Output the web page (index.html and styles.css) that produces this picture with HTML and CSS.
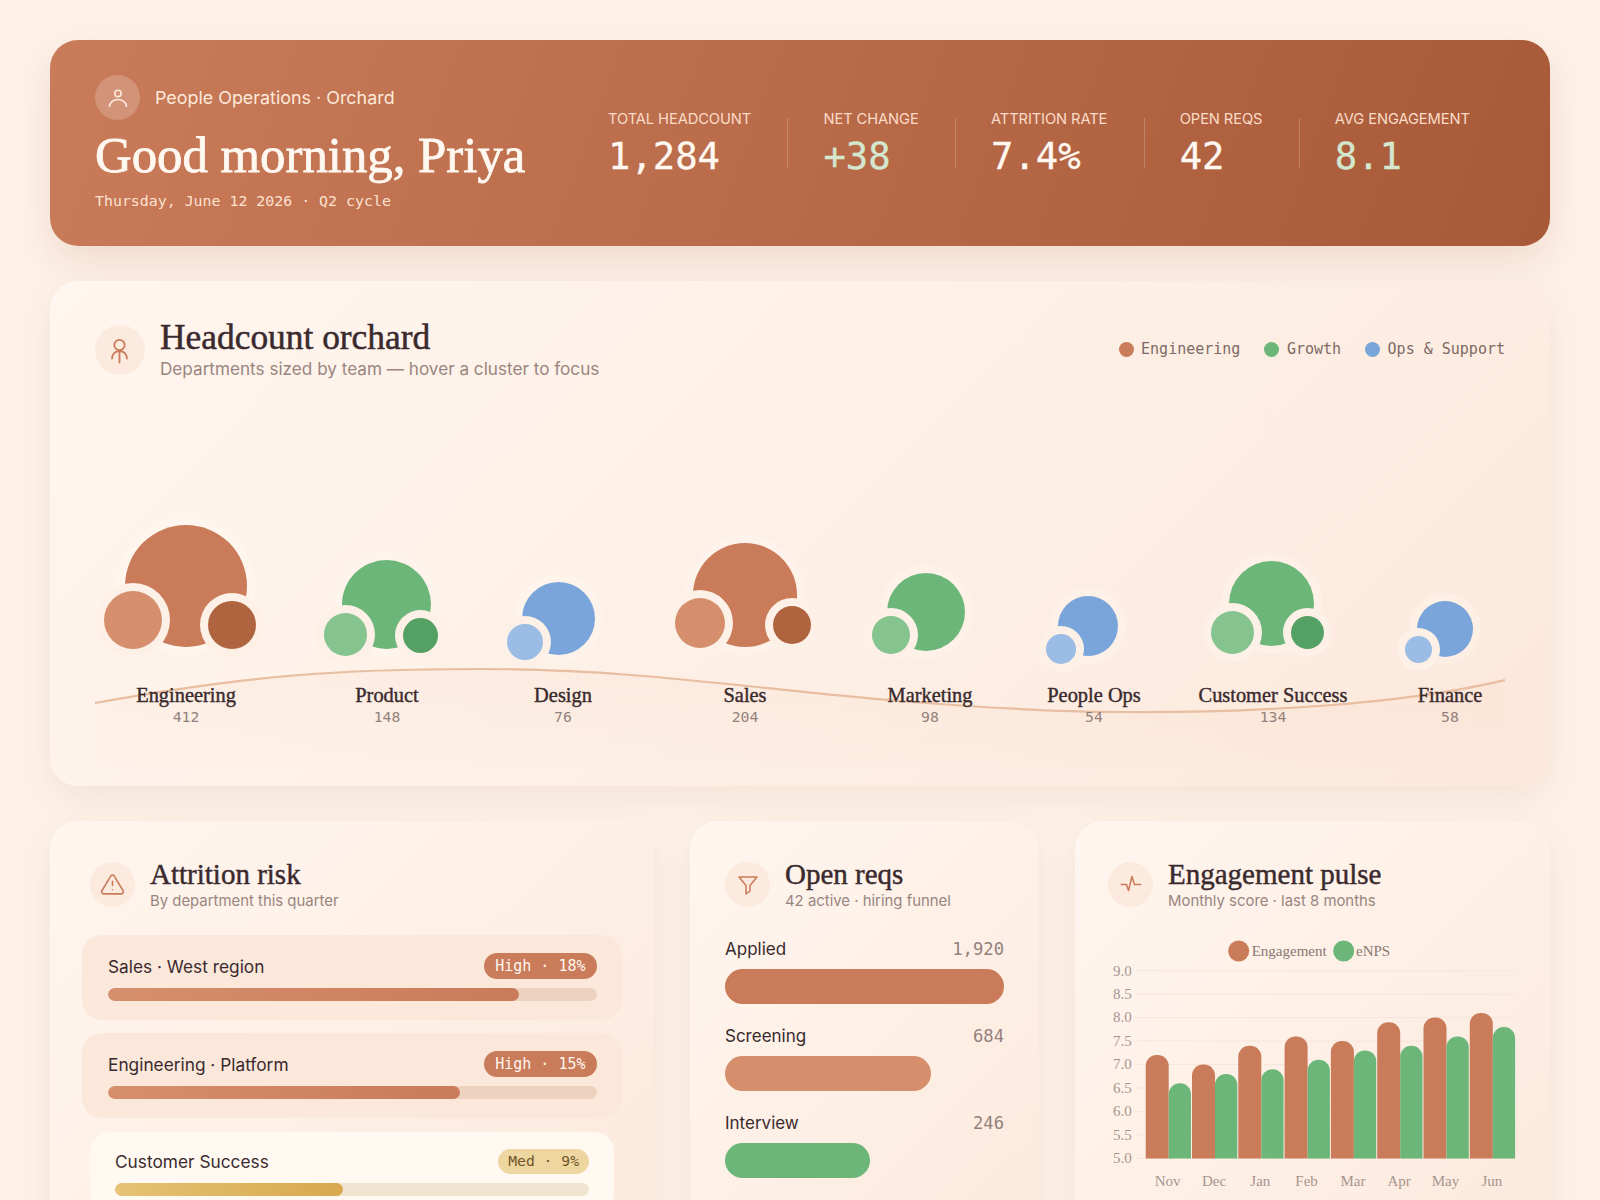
FILE: index.html
```html
<!DOCTYPE html>
<html lang="en">
<head>
<meta charset="utf-8">
<title>People Operations · Orchard</title>
<link rel="stylesheet" href="styles.css">
</head>
<body>
<main class="page">
  <header class="hero">
    <div class="hero-left">
      <div class="eyebrow">
        <span class="hero-icon">
          <svg viewBox="0 0 24 24" width="24" height="24" fill="none" stroke="currentColor" stroke-width="1.6" stroke-linecap="round"><circle cx="12" cy="7.5" r="3.2"/><path d="M3.5 20.5a8.5 7 0 0 1 17 0"/></svg>
        </span>
        <span>People Operations · Orchard</span>
      </div>
      <h1 class="hero-title">Good morning, Priya</h1>
      <div class="hero-date">Thursday, June 12 2026 · Q2 cycle</div>
    </div>
    <div class="stats">
      <div class="stat"><div class="stat-label">TOTAL HEADCOUNT</div><div class="stat-value">1,284</div></div>
      <div class="stat"><div class="stat-label">NET CHANGE</div><div class="stat-value good">+38</div></div>
      <div class="stat"><div class="stat-label">ATTRITION RATE</div><div class="stat-value">7.4%</div></div>
      <div class="stat"><div class="stat-label">OPEN REQS</div><div class="stat-value">42</div></div>
      <div class="stat"><div class="stat-label">AVG ENGAGEMENT</div><div class="stat-value good">8.1</div></div>
    </div>
  </header>

  <section class="card orchard-card">
    <div class="orchard-head">
      <div class="card-head">
        <span class="icon-badge big">
          <svg viewBox="0 0 30 30" width="30" height="30" fill="none" stroke="currentColor" stroke-width="1.8" stroke-linecap="round"><circle cx="14.5" cy="10" r="5.2"/><path d="M14.5 15.5V27.5"/><path d="M7 23.5a7.5 7.5 0 0 1 15 0"/></svg>
        </span>
        <div>
          <h2 class="card-title big">Headcount orchard</h2>
          <p class="card-sub big">Departments sized by team — hover a cluster to focus</p>
        </div>
      </div>
      <ul class="legend">
        <li class="legend-item"><span class="dot terra"></span>Engineering</li>
        <li class="legend-item"><span class="dot green"></span>Growth</li>
        <li class="legend-item"><span class="dot blue"></span>Ops &amp; Support</li>
      </ul>
    </div>

    <div class="orchard">
      <svg class="ground" viewBox="0 0 1410 370" width="1410" height="370" fill="none">
        <defs>
          <linearGradient id="groundFill" x1="0" y1="0" x2="0" y2="1">
            <stop offset="0" stop-color="#f3c9ae" stop-opacity=".12"/>
            <stop offset="1" stop-color="#f3c9ae" stop-opacity=".03"/>
          </linearGradient>
        </defs>
        <path d="M0 303C155 275 245 269 385 269C545 269 665 290 805 301C905 309 965 312 1025 312C1155 313 1305 305 1410 280V365H0Z" fill="url(#groundFill)"/>
        <path d="M0 303C155 275 245 269 385 269C545 269 665 290 805 301C905 309 965 312 1025 312C1155 313 1305 305 1410 280" stroke="#e8bda0" stroke-width="2.2"/>
      </svg>

      <span class="b main terra" style="left:30px;top:125px;width:122px;height:122px"></span>
      <span class="b side terra-l" style="left:9px;top:191px;width:58px;height:58px"></span>
      <span class="b side terra-d" style="left:113px;top:201px;width:48px;height:48px"></span>

      <span class="b main green" style="left:247px;top:160px;width:89px;height:89px"></span>
      <span class="b side green-l" style="left:229px;top:213px;width:43px;height:43px"></span>
      <span class="b side green-d" style="left:308px;top:218px;width:35px;height:35px"></span>

      <span class="b main blue" style="left:427px;top:182px;width:73px;height:73px"></span>
      <span class="b side blue-l" style="left:412px;top:224px;width:36px;height:36px"></span>

      <span class="b main terra" style="left:598px;top:143px;width:104px;height:104px"></span>
      <span class="b side terra-l" style="left:580px;top:198px;width:50px;height:50px"></span>
      <span class="b side terra-d" style="left:678px;top:206px;width:38px;height:38px"></span>

      <span class="b main green" style="left:792px;top:173px;width:78px;height:78px"></span>
      <span class="b side green-l" style="left:777px;top:216px;width:38px;height:38px"></span>

      <span class="b main blue" style="left:963px;top:196px;width:60px;height:60px"></span>
      <span class="b side blue-l" style="left:951px;top:234px;width:30px;height:30px"></span>

      <span class="b main green" style="left:1134px;top:161px;width:85px;height:85px"></span>
      <span class="b side green-l" style="left:1116px;top:211px;width:43px;height:43px"></span>
      <span class="b side green-d" style="left:1196px;top:216px;width:33px;height:33px"></span>

      <span class="b main blue" style="left:1322px;top:201px;width:56px;height:56px"></span>
      <span class="b side blue-l" style="left:1310px;top:236px;width:27px;height:27px"></span>

      <div class="tag" style="left:91px"><div class="tag-name">Engineering</div><div class="tag-count">412</div></div>
      <div class="tag" style="left:292px"><div class="tag-name">Product</div><div class="tag-count">148</div></div>
      <div class="tag" style="left:468px"><div class="tag-name">Design</div><div class="tag-count">76</div></div>
      <div class="tag" style="left:650px"><div class="tag-name">Sales</div><div class="tag-count">204</div></div>
      <div class="tag" style="left:835px"><div class="tag-name">Marketing</div><div class="tag-count">98</div></div>
      <div class="tag" style="left:999px"><div class="tag-name">People Ops</div><div class="tag-count">54</div></div>
      <div class="tag" style="left:1178px"><div class="tag-name">Customer Success</div><div class="tag-count">134</div></div>
      <div class="tag" style="left:1355px"><div class="tag-name">Finance</div><div class="tag-count">58</div></div>
    </div>
  </section>

  <div class="grid">
    <section class="card risk-card">
      <div class="card-head small">
        <span class="icon-badge">
          <svg viewBox="0 0 24 24" width="25" height="25" fill="none" stroke="currentColor" stroke-width="1.5" stroke-linecap="round" stroke-linejoin="round"><path d="M10.3 3.9 1.8 18a2 2 0 0 0 1.7 3h17a2 2 0 0 0 1.7-3L13.7 3.9a2 2 0 0 0-3.4 0Z"/><path d="M12 9v4"/><path d="M12 17h.01"/></svg>
        </span>
        <div>
          <h2 class="card-title">Attrition risk</h2>
          <p class="card-sub">By department this quarter</p>
        </div>
      </div>
      <div class="risks">
        <div class="risk">
          <div class="risk-top"><span>Sales · West region</span><span class="pill high">High · 18%</span></div>
          <div class="track"><div class="fill fill-high" style="width:84%"></div></div>
        </div>
        <div class="risk">
          <div class="risk-top"><span>Engineering · Platform</span><span class="pill high">High · 15%</span></div>
          <div class="track"><div class="fill fill-high" style="width:72%"></div></div>
        </div>
        <div class="risk risk-focus">
          <div class="risk-top"><span>Customer Success</span><span class="pill med">Med · 9%</span></div>
          <div class="track track-med"><div class="fill fill-med" style="width:48%"></div></div>
        </div>
      </div>
    </section>

    <section class="card">
      <div class="card-head small">
        <span class="icon-badge">
          <svg viewBox="0 0 24 24" width="24" height="24" fill="none" stroke="currentColor" stroke-width="1.5" stroke-linejoin="round"><path d="M3 4h18l-7 8.5V18l-4 3v-8.5Z"/></svg>
        </span>
        <div>
          <h2 class="card-title">Open reqs</h2>
          <p class="card-sub">42 active · hiring funnel</p>
        </div>
      </div>
      <div class="funnel">
        <div class="stage"><div class="stage-top"><span>Applied</span><span class="stage-num">1,920</span></div><div class="stage-bar terra" style="width:100%"></div></div>
        <div class="stage"><div class="stage-top"><span>Screening</span><span class="stage-num">684</span></div><div class="stage-bar terra-l" style="width:74%"></div></div>
        <div class="stage"><div class="stage-top"><span>Interview</span><span class="stage-num">246</span></div><div class="stage-bar green" style="width:52%"></div></div>
      </div>
    </section>

    <section class="card pulse-card">
      <div class="card-head small">
        <span class="icon-badge">
          <svg viewBox="0 0 24 24" width="24" height="24" fill="none" stroke="currentColor" stroke-width="1.5" stroke-linecap="round" stroke-linejoin="round"><path d="M2.2 11.5h5.3l2 6 3.5-14 2.5 8h6"/></svg>
        </span>
        <div>
          <h2 class="card-title">Engagement pulse</h2>
          <p class="card-sub">Monthly score · last 8 months</p>
        </div>
      </div>
      <svg class="chart" viewBox="0 0 408 252" width="408" height="252">
        <defs><clipPath id="plot"><rect x="0" y="0" width="408" height="218.6"/></clipPath></defs>
        <circle cx="130.7" cy="11" r="10.5" class="c-terra"/>
        <text x="143.7" y="16" class="chart-legend">Engagement</text>
        <circle cx="235.7" cy="11" r="10.5" class="c-green"/>
        <text x="248" y="16" class="chart-legend">eNPS</text>
        <g class="gridlines">
          <path d="M28 30.7H406M28 54.2H406M28 77.6H406M28 101H406M28 124.5H406M28 147.9H406M28 171.4H406M28 194.8H406M28 218.3H406"/>
        </g>
        <g class="chart-y">
          <text x="23.7" y="35.5">9.0</text><text x="23.7" y="59">8.5</text><text x="23.7" y="82.4">8.0</text><text x="23.7" y="105.8">7.5</text><text x="23.7" y="129.3">7.0</text><text x="23.7" y="152.7">6.5</text><text x="23.7" y="176.2">6.0</text><text x="23.7" y="199.6">5.5</text><text x="23.7" y="223.1">5.0</text>
        </g>
        <g clip-path="url(#plot)">
          <g class="c-terra">
            <rect x="37.7" y="115.1" width="23" height="130" rx="11"/><rect x="84" y="124.5" width="23" height="130" rx="11"/><rect x="130.3" y="105.7" width="23" height="140" rx="11"/><rect x="176.6" y="96.4" width="23" height="150" rx="11"/><rect x="222.9" y="101" width="23" height="150" rx="11"/><rect x="269.2" y="82.3" width="23" height="170" rx="11"/><rect x="315.5" y="77.6" width="23" height="170" rx="11"/><rect x="361.8" y="72.9" width="23" height="180" rx="11"/>
          </g>
          <g class="c-green">
            <rect x="60.7" y="143.3" width="22.3" height="110" rx="11"/><rect x="107" y="133.9" width="22.3" height="110" rx="11"/><rect x="153.3" y="129.2" width="22.3" height="110" rx="11"/><rect x="199.6" y="119.8" width="22.3" height="130" rx="11"/><rect x="245.9" y="110.4" width="22.3" height="140" rx="11"/><rect x="292.2" y="105.7" width="22.3" height="140" rx="11"/><rect x="338.5" y="96.4" width="22.3" height="150" rx="11"/><rect x="384.8" y="87" width="22.3" height="160" rx="11"/>
          </g>
        </g>
        <g class="chart-x">
          <text x="59.7" y="246">Nov</text><text x="106" y="246">Dec</text><text x="152.3" y="246">Jan</text><text x="198.6" y="246">Feb</text><text x="244.9" y="246">Mar</text><text x="291.2" y="246">Apr</text><text x="337.5" y="246">May</text><text x="383.8" y="246">Jun</text>
        </g>
      </svg>
    </section>
  </div>
</main>
</body>
</html>
```
FILE: styles.css
```css
* { box-sizing: border-box; }
html, body { margin: 0; height: 1200px; overflow: hidden; }
body {
  background: #fdf1e7;
  color: #3a2a2e;
  font-family: "Inter", "Liberation Sans", sans-serif;
}
.page { padding: 40px 50px 0; display: flex; flex-direction: column; gap: 35px; }

.hero {
  height: 206px;
  border-radius: 28px;
  background: linear-gradient(110deg, #c97b5a 0%, #a85a38 100%);
  box-shadow: 0 16px 36px rgba(168, 90, 56, .14);
  padding: 35px 45px 0;
  display: flex;
  justify-content: space-between;
  color: #fff8f1;
}
.eyebrow { display: flex; align-items: center; gap: 15px; font-size: 17.9px; color: #fde9da; }
.hero-icon { width: 45px; height: 45px; border-radius: 50%; background: rgba(255,255,255,.2); display: flex; align-items: center; justify-content: center; }
.hero-title { margin: 6px 0 0; font: 400 50.8px/58px "Liberation Serif", serif; -webkit-text-stroke: .8px #fff8f1; color: #fff8f1; }
.hero-date { margin-top: 7px; font: 14.9px/20px "DejaVu Sans Mono", monospace; color: #fde2d0; }

.stats { display: flex; padding-top: 33px; margin-right: -1px; }
.stat { padding: 0 36.2px; height: 50px; position: relative; }
.stat + .stat::before { content: ""; position: absolute; left: 0; top: 10px; bottom: -10px; width: 1px; background: rgba(255,255,255,.2); }
.stat-label { font-size: 14.7px; line-height: 22px; color: #fbdcc8; white-space: nowrap; letter-spacing: -.1px; }
.stat-value { margin-top: 5px; font: 37.2px/42px "DejaVu Sans Mono", monospace; -webkit-text-stroke: .3px currentColor; color: #fff8f1; }
.stat-value.good { color: #d3e8cf; }

.card {
  background: linear-gradient(135deg, #fff6ef 0%, #fdefe5 55%, #fce8db 100%);
  border-radius: 28px;
  box-shadow: 0 12px 32px rgba(170, 110, 75, .10);
  padding: 37px 35px 0;
}
.orchard-card { height: 505px; padding: 37px 45px 0; }
.risk-card { padding: 37px 32px 0; }
.risk-card .card-head { padding-left: 8px; }
.pulse-card { padding: 37px 33px 0; }
.orchard-head { display: flex; justify-content: space-between; align-items: flex-start; }
.card-head { display: flex; align-items: center; gap: 15px; }
.icon-badge { width: 45px; height: 45px; flex: none; border-radius: 50%; background: #fbeadd; color: #c97b5a; display: flex; align-items: center; justify-content: center; }
.icon-badge.big { width: 50px; height: 50px; }
.card-title { margin: 0; font: 400 29px/33px "Liberation Serif", serif; -webkit-text-stroke: .45px #3a2a2e; color: #3a2a2e; }
.card-title.big { font-size: 35.4px; line-height: 39px; -webkit-text-stroke: .5px #3a2a2e; }
.card-sub { margin: 0; font-size: 14.9px; line-height: 20px; color: #9a8580; }
.card-sub.big { font-size: 17.15px; line-height: 24px; }

.legend { list-style: none; margin: 21px 0 0; padding: 0; display: flex; gap: 24px; font: 15px/20px "DejaVu Sans Mono", monospace; color: #7d6a66; }
.legend-item { display: flex; align-items: center; gap: 7.5px; }
.dot { width: 15px; height: 15px; border-radius: 50%; }

.terra { background: #c97b5a; }
.terra-l { background: #d68f6c; }
.terra-d { background: #b0633f; }
.green { background: #6db67a; }
.green-l { background: #85c48f; }
.green-d { background: #55a064; }
.blue { background: #7aa5db; }
.blue-l { background: #9bbce4; }

.orchard { position: relative; height: 365px; margin-top: 19px; }
.ground { position: absolute; left: 0; top: 0; }
.b { position: absolute; display: block; border-radius: 50%; }
.b.main { box-shadow: 0 0 0 8px rgba(255, 248, 241, .35); }
.b.side { box-shadow: 0 0 0 8px #fdf0e6; }
.tag { position: absolute; top: 283px; width: 0; display: flex; flex-direction: column; align-items: center; white-space: nowrap; }
.tag-name { font: 400 20.4px/24px "Liberation Serif", serif; -webkit-text-stroke: .4px #3a2a2e; color: #3a2a2e; }
.tag-count { font: 14.8px/20px "DejaVu Sans Mono", monospace; color: #94817c; }

.grid { display: grid; grid-template-columns: 604px 349px 475px; gap: 36px; height: 460px; }
.risks { margin-top: 24px; display: flex; flex-direction: column; gap: 13px; }
.risk { height: 85px; border-radius: 20px; background: #fbe8da; padding: 18px 25px 0 26px; font-size: 17.3px; }
.risk-focus { margin: 1px 8px 0; background: #fff9f2; padding: 17px 25px 0; height: 82px; }
.risk-top { display: flex; justify-content: space-between; align-items: center; height: 26px; }
.risk-focus .risk-top { height: 25px; }
.pill { height: 26px; border-radius: 13px; padding: 0 11.5px; font: 15px/26px "DejaVu Sans Mono", monospace; }
.pill.high { background: #c97b5a; color: #fff6ee; }
.pill.med { background: #eed6a0; color: #6f5528; height: 25px; line-height: 24px; padding: 0 10px; font-size: 14.7px; }
.track { margin-top: 9px; height: 13px; border-radius: 7px; background: #eed2c0; overflow: hidden; }
.track-med { background: #efe4cf; }
.fill { height: 100%; border-radius: 7px; }
.fill-high { background: linear-gradient(90deg, #d68f6c, #c97b5a); }
.fill-med { background: linear-gradient(90deg, #e5c274, #d8a94f); }

.funnel { margin-top: 26px; display: flex; flex-direction: column; gap: 20px; }
.stage-top { display: flex; justify-content: space-between; align-items: center; font-size: 17px; line-height: 24px; }
.stage-num { font: 17.2px/24px "DejaVu Sans Mono", monospace; color: #94817c; }
.stage-bar { height: 35px; border-radius: 17.5px; margin-top: 8px; }

.chart { display: block; margin-top: 29px; }
.c-terra { fill: #c97b5a; }
.c-green { fill: #6db67a; }
.gridlines path { stroke: #f6e5da; stroke-width: 1; fill: none; }
.chart-legend { font: 15px "Liberation Serif", serif; fill: #8b7873; }
.chart-y text { font: 15px "Liberation Serif", serif; fill: #a8958f; text-anchor: end; }
.chart-x text { font: 15px "Liberation Serif", serif; fill: #a8958f; text-anchor: middle; }
```
